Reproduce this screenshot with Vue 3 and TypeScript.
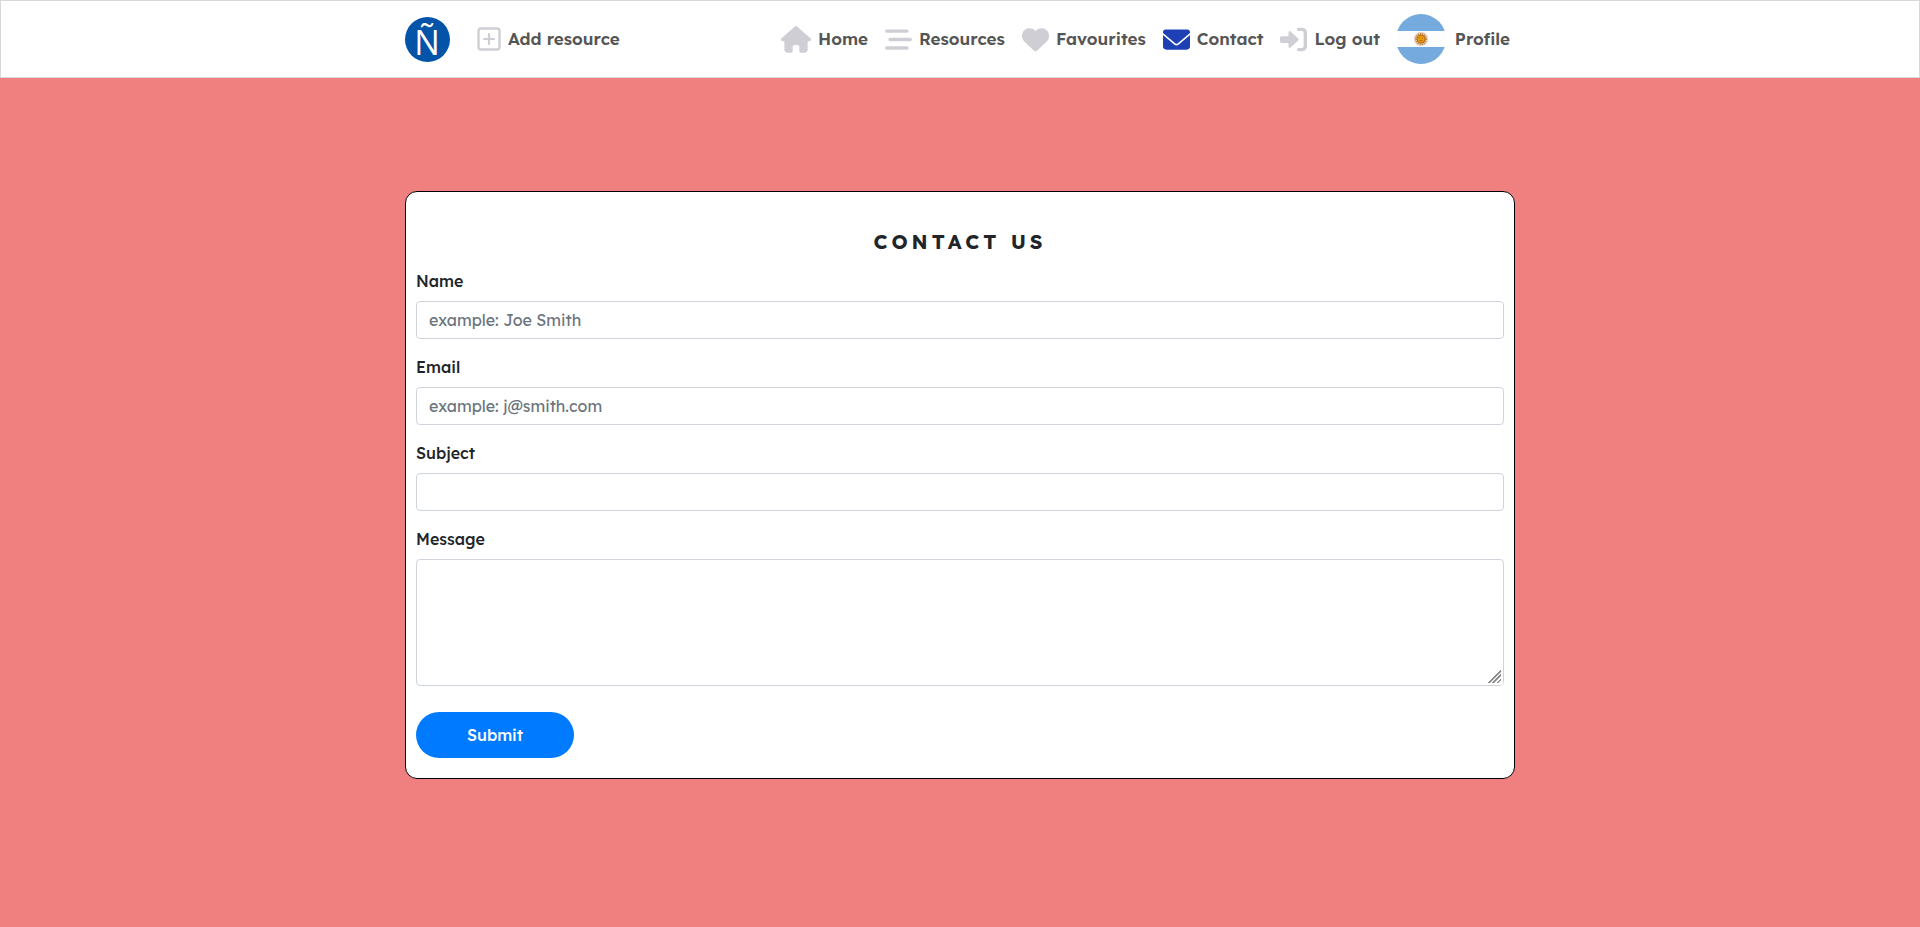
<script setup lang="ts">
import { ref } from 'vue'

interface NavItem {
  id: string
  label: string
  viewBox: string
  path: string
  wide?: boolean
  active?: boolean
}

const navItems: NavItem[] = [
  {
    id: 'home',
    label: 'Home',
    viewBox: '0 0 576 512',
    wide: true,
    path: 'M575.8 255.5c0 18-15 32.100-32 32.100h-32l.7 160.200c0 35-28 64.200-64 64.200H384c-20 0-32-14-32-32v-88c0-18-14-32-32-32h-64c-18 0-32 14-32 32v88c0 18-14 32-32 32h-64c-35 0-64-29-64-64V287.600H32c-18 0-32-14-32-32 0-9 3-17 10-24L266.400 8c7-7 15-8 22-8s15 2 21 7l255.400 224.500c8 7 12 15 11 24z',
  },
  {
    id: 'resources',
    label: 'Resources',
    viewBox: '0 0 512 512',
    path: 'M32 64h384a32 32 0 0 1 0 64H32a32 32 0 0 1 0-64zM96 224h384a32 32 0 0 1 0 64H96a32 32 0 0 1 0-64zM32 384h384a32 32 0 0 1 0 64H32a32 32 0 0 1 0-64z',
  },
  {
    id: 'favourites',
    label: 'Favourites',
    viewBox: '0 0 512 512',
    path: 'M47.600 300.400l180.700 168.700c7.500 7 17.400 10.900 27.700 10.900s20.200-3.900 27.700-10.900l180.700-168.700c30.400-28.300 47.600-68 47.600-109.500v-5.800c0-69.900-50.500-129.500-119.400-141C347 36.500 300.600 51.400 268 84l-12 12-12-12c-32.600-32.600-79-47.500-124.600-39.900C50.500 55.600 0 115.200 0 185.100v5.800c0 41.500 17.200 81.200 47.600 109.500z',
  },
  {
    id: 'contact',
    label: 'Contact',
    viewBox: '0 0 512 512',
    active: true,
    path: 'M464 64c26.500 0 48 21.500 48 48v20L275 330q-19 14-38 0L0 132v-20c0-26.500 21.500-48 48-48zM512 172v228c0 26.500-28.700 48-64 48H64c-35.300 0-64-21.500-64-48V172l217 182q39 28 78 0z',
  },
  {
    id: 'logout',
    label: 'Log out',
    viewBox: '0 0 512 512',
    path: 'M344.700 273.500l-144.100 136c-6.900 6.500-16.500 8.200-25.100 4.500-8.600-3.700-14.200-12.500-14.200-22V320H32c-17.700 0-32-14.300-32-32v-64c0-17.700 14.300-32 32-32h129.300v-72c0-9.500 5.600-18.300 14.200-22s18.200-2 25.100 4.500l144.100 136c9.700 9.600 9.700 25.400 0 35zM416 32h-64a32 32 0 0 0 0 64h64c17.700 0 32 14.300 32 32v256c0 17.700-14.300 32-32 32h-64a32 32 0 0 0 0 64h64c53 0 96-43 96-96V128c0-53-43-96-96-96z',
  },
]

const name = ref('')
const email = ref('')
const subject = ref('')
const message = ref('')
</script>

<template>
  <div class="page">
    <header class="navbar">
      <nav class="container bar">
        <a class="brand" href="#home">
          <svg viewBox="0 0 45 45">
            <circle cx="22.500" cy="22.500" r="22.500" fill="#0353a9" />
            <text x="22" y="38" text-anchor="middle">Ñ</text>
          </svg>
        </a>
        <a class="link add" href="#add">
          <svg class="icon" viewBox="0 0 24 24" fill="none" stroke="currentColor" stroke-linecap="round" aria-hidden="true">
            <rect x="1.500" y="1.500" width="21" height="21" rx="2.500" stroke-width="2.400" />
            <path d="M12 7v10M7 12h10" stroke-width="2.200" />
          </svg>
          <span>Add resource</span>
        </a>
        <ul class="menu">
          <li v-for="item in navItems" :key="item.id">
            <a class="link" :href="'#' + item.id">
              <svg class="icon" :class="{ wide: item.wide, active: item.active }" :viewBox="item.viewBox" aria-hidden="true">
                <path :d="item.path" fill="currentColor" />
              </svg>
              <span>{{ item.label }}</span>
            </a>
          </li>
          <li>
            <a class="link profile" href="#profile">
              <svg class="flag" viewBox="0 0 48 50" aria-hidden="true">
                <defs>
                  <clipPath id="flag-clip"><circle cx="24" cy="25" r="25" /></clipPath>
                </defs>
                <g clip-path="url(#flag-clip)">
                  <rect width="48" height="50" fill="#fdfdfd" />
                  <rect width="48" height="17" fill="#74aadd" />
                  <rect y="33" width="48" height="17" fill="#74aadd" />
                  <circle cx="24" cy="25" r="7" fill="#e3cbb0" />
                  <circle cx="24" cy="25" r="5" fill="none" stroke="#bd8550" stroke-width="2" stroke-dasharray="1 1" />
                  <circle cx="24" cy="25" r="4" fill="#eba000" stroke="#b56a16" />
                  <path d="M22 24h1.500M24.500 24H26M22.500 26.500h3" stroke="#a56010" stroke-width=".8" />
                </g>
              </svg>
              <span>Profile</span>
            </a>
          </li>
        </ul>
      </nav>
    </header>

    <main class="container">
      <form class="card" @submit.prevent>
        <h1>CONTACT US</h1>
        <div class="field">
          <label for="name">Name</label>
          <input id="name" v-model="name" type="text" placeholder="example: Joe Smith" />
        </div>
        <div class="field">
          <label for="email">Email</label>
          <input id="email" v-model="email" type="email" placeholder="example: j@smith.com" />
        </div>
        <div class="field">
          <label for="subject">Subject</label>
          <input id="subject" v-model="subject" type="text" />
        </div>
        <div class="field">
          <label for="message">Message</label>
          <textarea id="message" v-model="message"></textarea>
        </div>
        <button type="submit">Submit</button>
      </form>
    </main>
  </div>
</template>

<style>
body {
  margin: 0;
  background: #f08080;
}
</style>

<style scoped>
.page {
  min-height: 100vh;
  box-sizing: border-box;
  padding-bottom: 48px;
  background: #f08080;
  color: #212529;
  font: 400 16px/24px Lexend, Inter, "Open Sans", sans-serif;
}

.page *,
.page *::before {
  box-sizing: border-box;
}

.container {
  width: 100%;
  max-width: 1110px;
  margin: 0 auto;
}

.navbar {
  background: #fff;
  border: 1px solid #d8d8dc;
}

.bar {
  display: flex;
  align-items: center;
  min-height: 76px;
}

.brand,
.brand svg {
  display: block;
  width: 45px;
  height: 45px;
  overflow: visible;
}

.brand text {
  fill: #fff;
  font: 400 34px "Open Sans", "Noto Sans", sans-serif;
}

.link {
  display: flex;
  align-items: center;
  gap: 7px;
  color: #555;
  font-size: 17px;
  font-weight: 600;
  text-decoration: none;
  white-space: nowrap;
}

.add {
  margin-left: 27px;
}

.menu {
  display: flex;
  align-items: center;
  gap: 17px;
  margin: 0 5px 0 auto;
  padding: 0;
  list-style: none;
}

.icon {
  display: block;
  width: 27px;
  height: 27px;
  flex: none;
  color: #cfced4;
}

.icon.wide {
  width: 30px;
}

.icon.active {
  color: #1f40b4;
}

.add .icon {
  width: 24px;
  height: 24px;
}

.profile {
  gap: 10px;
}

.flag {
  display: block;
  width: 48px;
  height: 50px;
}

.card {
  margin-top: 113px;
  padding: 36px 10px 20px;
  background: #fff;
  border: 1px solid #000;
  border-radius: 12px;
}

h1 {
  margin: 0 0 13px;
  font-size: 20px;
  line-height: 28px;
  font-weight: 700;
  letter-spacing: 4px;
  text-align: center;
}

.field {
  display: flex;
  flex-direction: column;
  gap: 8px;
  margin-bottom: 16px;
}

label {
  font-weight: 500;
}

input,
textarea {
  display: block;
  width: 100%;
  height: 38px;
  margin: 0;
  padding: 6px 12px;
  border: 1px solid #ced4da;
  border-radius: 4px;
  background: #fff;
  color: #495057;
  font: inherit;
}

textarea {
  height: 127px;
  resize: vertical;
}

textarea::-webkit-resizer {
  border: solid #fff;
  border-width: 0 2px 2px 0;
  background:
    linear-gradient(135deg, #fff 48%, transparent 48%),
    repeating-linear-gradient(135deg, #888 0 1px, #fff 2px 3px);
}

::placeholder {
  color: #6c757d;
  opacity: 1;
}

button {
  display: block;
  min-width: 158px;
  height: 46px;
  margin-top: 26px;
  border: 0;
  border-radius: 23px;
  background: #007bff;
  color: #fff;
  font: inherit;
  font-weight: 500;
}
</style>
